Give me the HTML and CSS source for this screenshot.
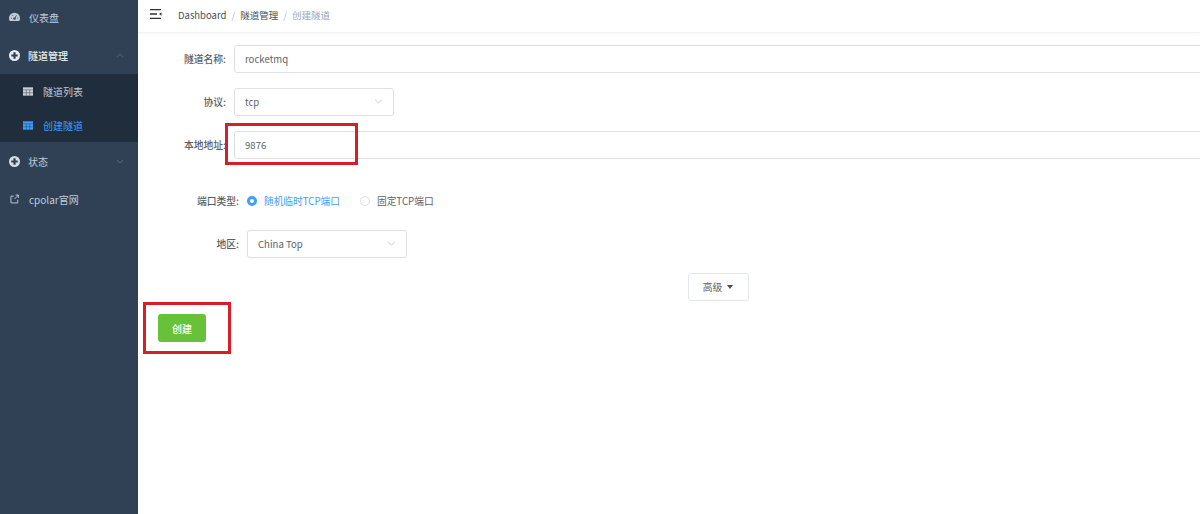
FILE: index.html
```html
<!DOCTYPE html>
<html lang="zh">
<head>
<meta charset="utf-8">
<title>创建隧道</title>
<link rel="stylesheet" href="styles.css">
</head>
<body>
<div class="app">
  <aside class="sidebar">
    <div class="item first">
      <svg class="icon" viewBox="0 0 14 12"><path fill="#bfcbd9" d="M7 .5A7 7 0 0 0 0 7.500c0 1.300.3 2.500.9 3.500h12.200c.6-1 .9-2.200.9-3.500A7 7 0 0 0 7 .5z"/><circle cx="7" cy="8" r="1.500" fill="#304156"/><path stroke="#304156" stroke-width="1.100" d="M7 8l2.500-4M2.500 7.500h1.200M4.500 3.500l.6 1M10.500 7.500h1.200"/></svg>
      <span class="label">仪表盘</span>
    </div>
    <div class="item open">
      <svg class="icon big" viewBox="1 1 12 12"><circle cx="7" cy="7" r="6" fill="#e6ebf1"/><path stroke="#304156" stroke-width="2.400" d="M7 3.500v7M3.500 7h7"/></svg>
      <span class="label strong">隧道管理</span>
      <svg class="chev" viewBox="0 0 10 6"><path d="M1 5l4-4 4 4"/></svg>
    </div>
    <div class="submenu">
      <div class="subitem">
        <svg class="grid" viewBox="0 0 12 10"><path fill="#c7d0da" d="M0 0h12v10H0z"/><path stroke="#1f2d3d" stroke-width=".5" d="M0 3h12M0 6.500h12M4 3v7M8 3v7"/></svg>
        <span>隧道列表</span>
      </div>
      <div class="subitem active">
        <svg class="grid" viewBox="0 0 12 10"><path fill="#409eff" d="M0 0h12v10H0z"/><path stroke="#1f2d3d" stroke-width=".5" d="M0 3h12M0 6.500h12M4 3v7M8 3v7"/></svg>
        <span>创建隧道</span>
      </div>
    </div>
    <div class="item status">
      <svg class="icon big" viewBox="1 1 12 12"><circle cx="7" cy="7" r="6" fill="#d5dce4"/><path stroke="#304156" stroke-width="2.400" d="M7 3.500v7M3.500 7h7"/></svg>
      <span class="label">状态</span>
      <svg class="chev" viewBox="0 0 10 6"><path d="M1 1l4 4 4-4"/></svg>
    </div>
    <div class="item site">
      <svg class="icon" viewBox="0 0 14 14"><path fill="none" stroke="#bfcbd9" stroke-width="1.300" d="M6 3H2v9.500h9.500V8M8.500 1.500h4v4M12.500 1.500L7 7"/></svg>
      <span class="label">cpolar官网</span>
    </div>
  </aside>
  <main class="main">
    <header class="topbar">
      <svg class="hamburger" viewBox="0 0 12 10"><path fill="none" stroke="#303133" stroke-width="1.300" d="M0 .7h11M0 5h7M0 9.300h11"/><path fill="#303133" d="M11.500 3.200L9 5l2.500 1.800z"/></svg>
      <nav class="crumbs">
        <span>Dashboard</span><i>/</i><span>隧道管理</span><i>/</i><span class="current">创建隧道</span>
      </nav>
    </header>
    <form class="form">
      <div class="row row-name">
        <label class="lab">隧道名称:</label>
        <div class="input wide">rocketmq</div>
      </div>
      <div class="row row-proto">
        <label class="lab">协议:</label>
        <div class="input select">tcp<svg class="arrow" viewBox="0 0 10 6"><path d="M1 1l4 4 4-4"/></svg></div>
      </div>
      <div class="row row-addr">
        <label class="lab">本地地址:</label>
        <div class="input wide">9876</div>
      </div>
      <div class="row row-port">
        <label class="lab lab2">端口类型:</label>
        <div class="radios">
          <span class="radio on"><b></b>随机临时TCP端口</span>
          <span class="radio"><b></b>固定TCP端口</span>
        </div>
      </div>
      <div class="row row-region">
        <label class="lab lab2">地区:</label>
        <div class="input select">China Top<svg class="arrow" viewBox="0 0 10 6"><path d="M1 1l4 4 4-4"/></svg></div>
      </div>
      <div class="adv-wrap"><div class="adv">高级<span class="caret"></span></div></div>
      <div class="create">创建</div>
    </form>
    <div class="mark mark-addr"></div>
    <div class="mark mark-create"></div>
  </main>
</div>
</body>
</html>
```

FILE: styles.css
```css
* { box-sizing: border-box; }
html, body { margin: 0; height: 100%; }
body {
  font-family: "Noto Sans CJK SC", "Noto Sans", "Liberation Sans", sans-serif;
  font-size: 10px;
  color: #606266;
  background: #fff;
  overflow: hidden;
}
.app { display: flex; height: 514px; }

.sidebar {
  width: 138px;
  flex: none;
  background: #304156;
  color: #bfcbd9;
  font-size: 10px;
}
.item { display: flex; align-items: center; position: relative; padding-left: 9px; }
.item.first { height: 36px; padding-bottom: 2px; }
.item.open { height: 38px; }
.item.status { height: 38px; }
.item.site { height: 38px; }
.icon { width: 11px; height: 10px; flex: none; }
.icon.big { width: 11px; height: 11px; }
.label { margin-left: 9px; }
.open .label, .status .label { margin-left: 8px; }
.strong { color: #e6ebf1; font-weight: 500; }
.chev {
  width: 8px; height: 5px;
  margin-left: auto; margin-right: 14px;
  fill: none; stroke: #5f7084; stroke-width: 1;
}
.submenu { background: #1f2d3d; }
.subitem { height: 34px; display: flex; align-items: center; padding: 1px 0 0 23px; color: #bfcbd9; }
.subitem span { margin-left: 10px; }
.subitem.active { color: #409eff; }
.grid { width: 10px; height: 9px; flex: none; }

.main { flex: 1; min-width: 0; position: relative; }
.topbar {
  height: 33px;
  display: flex;
  align-items: center;
  border-bottom: 1px solid #f2f3f5;
  padding: 0 0 4px 12px;
  box-shadow: 0 1px 3px rgba(0, 21, 41, .04);
}
.hamburger { width: 12px; height: 10px; flex: none; }
.crumbs { margin: 1px 0 0 16px; display: flex; align-items: center; color: #4a4f57; font-size: 9.500px; }
.crumbs i { font-style: normal; color: #b4bccc; margin: 0 5px; }
.crumbs .current { color: #97a8be; }

.form { padding-top: 12px; }
.row { display: flex; align-items: center; }
.lab { width: 96px; text-align: right; padding: 0 8px 1px 0; flex: none; color: #5a5e66; font-size: 9.800px; font-weight: 500; }
.lab2 { width: 109px; }
.input {
  border: 1px solid #dcdfe6;
  border-radius: 3px;
  padding: 0 10px 1px;
  color: #606266;
  background: #fff;
  font-size: 9.600px;
  display: flex;
  align-items: center;
}
.wide { flex: 1; margin-right: -4px; }
.select { width: 160px; justify-content: space-between; }
.row-name .input { height: 28px; }
.row-proto { margin-top: 15px; }
.row-proto .input { height: 28px; }
.row-addr { margin-top: 15px; }
.row-addr .input { height: 28px; }
.row-port { margin-top: 34px; height: 16px; }
.row-region { margin-top: 21px; }
.row-region .input { height: 28px; }
.arrow { width: 9px; height: 5px; fill: none; stroke: #c0c4cc; stroke-width: 1; }

.radios { display: flex; gap: 20px; font-size: 9.700px; }
.radio { display: flex; align-items: center; color: #606266; }
.radio b {
  width: 10px; height: 10px;
  border-radius: 50%;
  border: 1px solid #dcdfe6;
  margin-right: 7px;
  background: #fff;
}
.radio.on { color: #409eff; }
.radio.on b { border: 3px solid #409eff; }

.adv-wrap { display: flex; justify-content: center; margin-top: 15px; padding-left: 98px; }
.adv {
  width: 61px; height: 28px;
  border: 1px solid #e4e7ed;
  border-radius: 3px;
  padding-bottom: 1px;
  display: flex; align-items: center; justify-content: center;
  color: #606266;
  font-size: 9.800px;
}
.caret {
  margin-left: 5px;
  width: 0; height: 0;
  border-left: 3.500px solid transparent;
  border-right: 3.500px solid transparent;
  border-top: 4px solid #4a4f57;
}
.create {
  width: 48px; height: 28px;
  margin: 13px 0 0 20px;
  background: #67c23a;
  border-radius: 3px;
  color: #fff;
  font-size: 10px;
  font-weight: 500;
  display: flex; align-items: center; justify-content: center;
}

.mark { position: absolute; border: 3px solid #d81e26; pointer-events: none; }
.mark-addr { left: 87px; top: 123px; width: 133px; height: 42px; }
.mark-create { left: 5px; top: 302px; width: 88px; height: 52px; }
```
